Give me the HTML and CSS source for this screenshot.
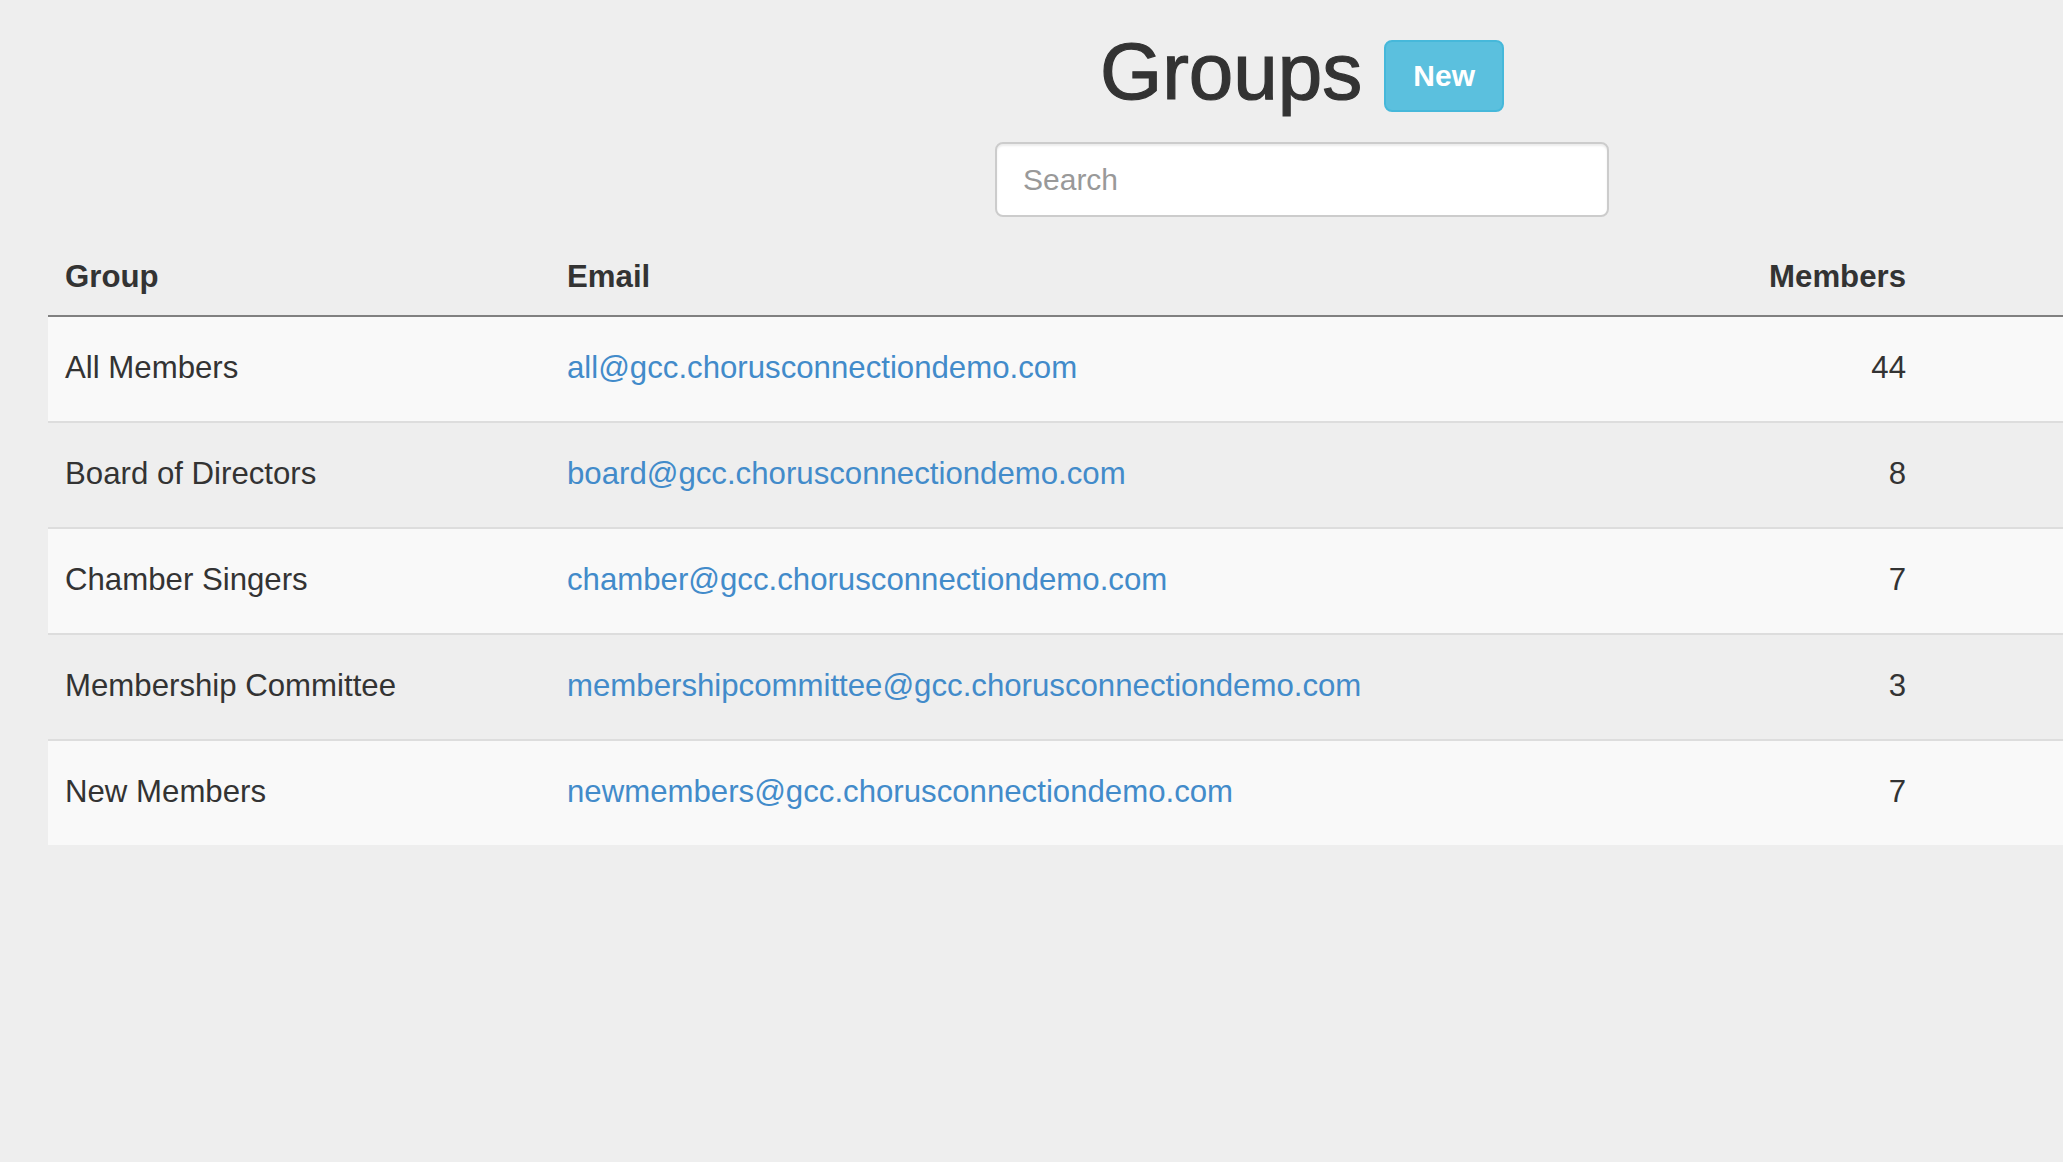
FILE: index.html
```html
<!DOCTYPE html>
<html lang="en">
	<head>
		<meta charset="UTF-8">
		<title>Groups</title>
		<link rel="stylesheet" href="styles.css">
	</head>
	<body>
		<div class="pageHead">
			<div class="titleRow">
				<h1>Groups</h1>
				<button type="button" class="btnNew">New</button>
			</div>
			<input type="text" class="search" placeholder="Search">
		</div>
		<table class="groups">
			<colgroup>
				<col class="colGroup">
				<col>
				<col class="colMembers">
				<col class="colExtra">
			</colgroup>
			<thead>
				<tr>
					<th>Group</th>
					<th>Email</th>
					<th class="num">Members</th>
					<th></th>
				</tr>
			</thead>
			<tbody>
				<tr>
					<td>All Members</td>
					<td><a href="#">all@gcc.chorusconnectiondemo.com</a></td>
					<td class="num">44</td>
					<td></td>
				</tr>
				<tr>
					<td>Board of Directors</td>
					<td><a href="#">board@gcc.chorusconnectiondemo.com</a></td>
					<td class="num">8</td>
					<td></td>
				</tr>
				<tr>
					<td>Chamber Singers</td>
					<td><a href="#">chamber@gcc.chorusconnectiondemo.com</a></td>
					<td class="num">7</td>
					<td></td>
				</tr>
				<tr>
					<td>Membership Committee</td>
					<td><a href="#">membershipcommittee@gcc.chorusconnectiondemo.com</a></td>
					<td class="num">3</td>
					<td></td>
				</tr>
				<tr>
					<td>New Members</td>
					<td><a href="#">newmembers@gcc.chorusconnectiondemo.com</a></td>
					<td class="num">7</td>
					<td></td>
				</tr>
			</tbody>
		</table>
	</body>
</html>
```

FILE: styles.css
```css
html, body {
	margin: 0;
	background-color: #eeeeee;
}
body {
	font-family: "Liberation Sans", Arial, Helvetica, sans-serif;
	font-size: 31.2px;
	line-height: 44px;
	color: #333333;
}
.pageHead {
	padding: 28px 0 0 541px;
	display: flex;
	flex-direction: column;
	align-items: center;
}
.titleRow {
	display: flex;
	align-items: flex-start;
	gap: 22px;
}
h1 {
	margin: 0;
	font-size: 80px;
	font-weight: normal;
	line-height: 88px;
	color: #333333;
	-webkit-text-stroke: 1.2px #333333;
}
.btnNew {
	margin-top: 12px;
	padding: 13px 27px;
	font-family: inherit;
	font-size: 30px;
	font-weight: bold;
	line-height: 42px;
	color: #ffffff;
	background-color: #5bc0de;
	border: 2px solid #46b8da;
	border-radius: 8px;
	cursor: pointer;
}
.search {
	margin-top: 26px;
	width: 614px;
	height: 75px;
	box-sizing: border-box;
	padding: 0 26px;
	font-family: inherit;
	font-size: 30px;
	color: #555555;
	background-color: #ffffff;
	border: 2px solid #cccccc;
	border-radius: 8px;
	box-shadow: inset 0 2px 2px rgba(0, 0, 0, 0.075);
}
.search::placeholder {
	color: #999999;
}
.groups {
	margin: 20px 0 0 48px;
	width: 2015px;
	table-layout: fixed;
	border-collapse: collapse;
	border-spacing: 0;
}
.colGroup {
	width: 502px;
}
.colMembers {
	width: 200px;
}
.colExtra {
	width: 140px;
}
.groups th {
	text-align: left;
	font-weight: bold;
	padding: 18px 17px 16px;
	border-bottom: 2px solid #808080;
}
.groups td {
	padding: 29px 17px 31px;
	border-top: 2px solid #dddddd;
}
.groups tbody tr:first-child td {
	border-top: none;
}
.groups tbody tr:nth-child(odd) td {
	background-color: #f9f9f9;
}
.groups .num {
	text-align: right;
}
.groups a {
	color: #428bca;
	text-decoration: none;
}
```
